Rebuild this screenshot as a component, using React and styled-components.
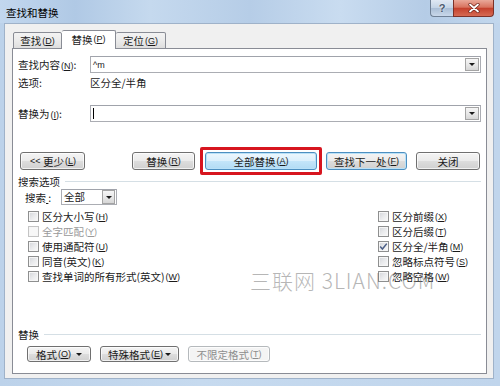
import React from 'react';
import styled, { createGlobalStyle } from 'styled-components';

const FONT = `"Noto Sans CJK SC", "Noto Sans", "Liberation Sans", sans-serif`;

const Global = createGlobalStyle`
  html, body { margin: 0; padding: 0; background: #c3d7ec; overflow: hidden; }
  * { box-sizing: border-box; }
`;

const Window = styled.div`
  position: relative;
  width: 500px;
  height: 386px;
  display: flex;
  flex-direction: column;
  background: linear-gradient(90deg, #bcd2ea 0%, #c6daef 40%, #c0d5ec 100%);
  font-family: ${FONT};
  font-size: 10.5px;
  color: #1a1a1a;
  overflow: hidden;
`;

const TitleBar = styled.div`
  height: 23px;
  flex: none;
  display: flex;
  align-items: flex-start;
  background: linear-gradient(90deg, #c2d7ee 0%, #b0c9e5 15%, #c5d9ee 30%, #b6cde7 50%, #c9dcf0 68%, #b5cce6 85%, #c2d7ed 100%);
`;

const Title = styled.div`
  padding: 6px 0 0 6px;
  font-size: 10.5px;
  line-height: 13px;
  color: #000;
`;

const Caption = styled.div`
  margin-left: auto;
  margin-right: 6px;
  display: flex;
`;

const HelpBtn = styled.div`
  width: 23px;
  height: 17px;
  border: 1px solid #6f8095;
  border-top: none;
  border-right: none;
  border-radius: 0 0 0 4px;
  background: linear-gradient(180deg, #dfe8f3 0%, #c4d4e6 48%, #aabed6 52%, #c9d8ea 100%);
  display: flex;
  align-items: center;
  justify-content: center;
  font-family: "Liberation Sans", sans-serif;
  font-size: 11px;
  font-weight: bold;
  color: #4a5a6e;
  text-shadow: 0 0 2px #fff;
`;

const CloseBtn = styled.div`
  width: 41px;
  height: 17px;
  border: 1px solid #7c3128;
  border-top: none;
  border-radius: 0 0 4px 0;
  background: linear-gradient(180deg, #e9a899 0%, #d8735f 45%, #c4412d 52%, #d66a53 100%);
  display: flex;
  align-items: center;
  justify-content: center;
`;

const Client = styled.div`
  flex: none;
  height: 356px;
  margin: 0 6px 0 4px;
  border: 1px solid #9fb2c9;
  background: #f0f0f0;
  padding: 6px 6px 4px 7px;
  display: flex;
  flex-direction: column;
`;

const Tabs = styled.div`
  display: flex;
  align-items: flex-end;
  height: 19px;
  margin-bottom: -1px;
  padding-left: 1px;
  position: relative;
  z-index: 1;
`;

const Tab = styled.div`
  width: ${p => p.$w}px;
  height: ${p => (p.$active ? 19 : 17)}px;
  border: 1px solid #898c95;
  border-bottom: ${p => (p.$active ? 'none' : '1px solid #898c95')};
  border-left: ${p => (p.$noLeft ? 'none' : '1px solid #898c95')};
  border-radius: 2px 2px 0 0;
  background: ${p => (p.$active ? '#ffffff' : 'linear-gradient(180deg, #f3f3f3 0%, #ebebeb 50%, #dedede 100%)')};
  display: flex;
  align-items: center;
  justify-content: center;
  padding-bottom: ${p => (p.$active ? 2 : 0)}px;
  white-space: nowrap;
`;

const Panel = styled.div`
  position: relative;
  flex: 1;
  border: 1px solid #898c95;
  background: #ffffff;
  padding: 7px 5px 0 5px;
  display: flex;
  flex-direction: column;
`;

const FieldRow = styled.div`
  display: grid;
  grid-template-columns: 72px 1fr;
  align-items: center;
  height: ${p => p.$h || 17}px;
  margin-top: ${p => p.$mt || 0}px;
  white-space: nowrap;
`;

const Combo = styled.div`
  height: ${p => p.$h || 17}px;
  width: ${p => (p.$w ? `${p.$w}px` : 'auto')};
  border: 1px solid #abadb3;
  border-top-color: #a0a3ab;
  background: #fff;
  display: flex;
  align-items: center;
  justify-content: space-between;
  padding: 0 1px 0 2px;
`;

const ComboText = styled.span`
  font-family: ${p => (p.$mono ? '"Liberation Sans", sans-serif' : FONT)};
  font-size: ${p => (p.$mono ? 9 : 10.5)}px;
  line-height: 12px;
`;

const ArrowBox = styled.div`
  width: ${p => p.$w || 14}px;
  height: ${p => p.$h || 13}px;
  border: 1px solid #a4a4a4;
  background: linear-gradient(180deg, #f6f6f6 0%, #e8e8e8 50%, #d6d6d6 100%);
  display: flex;
  align-items: center;
  justify-content: center;
`;

const Tri = styled.span`
  width: 0;
  height: 0;
  border-left: 3px solid transparent;
  border-right: 3px solid transparent;
  border-top: 3px solid #1a1a1a;
  margin-left: ${p => p.$ml || 0}px;
`;

const Caret = styled.span`
  width: 1px;
  height: 11px;
  background: #000;
`;

const ButtonRow = styled.div`
  display: flex;
  align-items: center;
  height: ${p => p.$h}px;
  margin-top: ${p => p.$mt}px;
`;

const Button = styled.div`
  flex: none;
  width: ${p => p.$w}px;
  height: ${p => p.$h || 18}px;
  margin-left: ${p => p.$ml || 0}px;
  border: 1px solid ${p => (p.$disabled ? '#b5b9bc' : p.$def ? '#4d8fc0' : '#707070')};
  border-radius: 3px;
  background: ${p =>
    p.$hot
      ? 'linear-gradient(180deg, #eef7fd 0%, #dcf0fc 48%, #c3e5f9 52%, #b2dbf4 100%)'
      : p.$disabled
      ? '#f4f4f4'
      : 'linear-gradient(180deg, #f4f4f4 0%, #ebebeb 48%, #dddddd 52%, #d0d0d0 100%)'};
  box-shadow: ${p => (p.$def ? 'inset 0 0 0 1px #b9e1f8' : 'inset 0 0 0 1px rgba(255,255,255,0.7)')};
  color: ${p => (p.$disabled ? '#8d8d8d' : '#1a1a1a')};
  display: flex;
  align-items: center;
  justify-content: center;
  white-space: nowrap;
`;

const Highlight = styled.div`
  flex: none;
  margin-left: ${p => p.$ml}px;
  border: 3px solid #d7151f;
  border-radius: 2px;
  padding: 2px;
`;

const Section = styled.div`
  display: flex;
  align-items: center;
  height: 12px;
  margin-top: ${p => p.$mt || 0}px;
`;

const SectionLine = styled.div`
  flex: 1;
  border-top: 1px solid #d5dfe5;
  margin-left: 5px;
`;

const SearchRow = styled.div`
  display: flex;
  align-items: center;
  margin-top: 2px;
  padding-left: 7px;
`;

const SearchLabel = styled.span`
  width: 36px;
`;

const Checks = styled.div`
  display: grid;
  grid-template-columns: 350px auto;
  padding-left: 10px;
  margin-top: 4px;
`;

const Col = styled.div`
  display: flex;
  flex-direction: column;
`;

const CheckRow = styled.div`
  display: flex;
  align-items: center;
  height: 15px;
  white-space: nowrap;
  color: ${p => (p.$disabled ? '#9a9a9a' : '#1a1a1a')};
`;

const Box = styled.span`
  width: 11px;
  height: 11px;
  flex: none;
  border: 1px solid ${p => (p.$disabled ? '#c4c4c4' : '#8e8f8f')};
  background: ${p => (p.$disabled ? '#f7f7f7' : 'linear-gradient(135deg, #d2d4d8 0%, #e9eaec 50%, #fafafa 100%)')};
  box-shadow: inset 0 0 0 1px #f6f6f6;
  margin-right: 3px;
  display: flex;
  align-items: center;
  justify-content: center;
`;

const Mn = styled.span`
  font-family: "Liberation Sans", sans-serif;
  font-size: 9px;
  margin-left: 1px;
`;

const Watermark = styled.div`
  position: absolute;
  left: 237px;
  top: 221px;
  font-family: ${FONT};
  font-weight: 300;
  font-size: 21px;
  line-height: 20px;
  letter-spacing: 1px;
  color: rgba(110, 110, 110, 0.5);
  white-space: nowrap;
  pointer-events: none;
`;

const M = ({ k }) => (
  <Mn>
    (<u>{k}</u>)
  </Mn>
);

const Check = ({ label, k, checked, disabled }) => (
  <CheckRow $disabled={disabled}>
    <Box $disabled={disabled}>
      {checked && (
        <svg width="9" height="9" viewBox="0 0 9 9">
          <path d="M1.2 4.6 L3.4 7 L7.8 1.6" fill="none" stroke="#4b5e86" strokeWidth="1.5" />
        </svg>
      )}
    </Box>
    {label}
    <M k={k} />
  </CheckRow>
);

export default function App() {
  return (
    <>
      <Global />
      <Window>
        <TitleBar>
          <Title>查找和替换</Title>
          <Caption>
            <HelpBtn>?</HelpBtn>
            <CloseBtn>
              <svg width="12" height="10" viewBox="0 0 12 10">
                <path d="M2 1.5 L10 8.5 M10 1.5 L2 8.5" stroke="#6b2118" strokeWidth="3.2" strokeLinecap="round" />
                <path d="M2 1.5 L10 8.5 M10 1.5 L2 8.5" stroke="#ffffff" strokeWidth="1.8" strokeLinecap="round" />
              </svg>
            </CloseBtn>
          </Caption>
        </TitleBar>
        <Client>
          <Tabs>
            <Tab $w={49}>
              查找<M k="D" />
            </Tab>
            <Tab $w={54} $active $noLeft>
              替换<M k="P" />
            </Tab>
            <Tab $w={50} $noLeft>
              定位<M k="G" />
            </Tab>
          </Tabs>
          <Panel>
            <FieldRow>
              <span>
                查找内容<M k="N" />:
              </span>
              <Combo>
                <ComboText $mono>^m</ComboText>
                <ArrowBox>
                  <Tri />
                </ArrowBox>
              </Combo>
            </FieldRow>
            <FieldRow $h={14} $mt={2}>
              <span>选项:</span>
              <span>区分全/半角</span>
            </FieldRow>
            <FieldRow $mt={16}>
              <span>
                替换为<M k="I" />:
              </span>
              <Combo>
                <Caret />
                <ArrowBox>
                  <Tri />
                </ArrowBox>
              </Combo>
            </FieldRow>

            <ButtonRow $h={28} $mt={25}>
              <Button $w={65} $ml={2}>
                <Mn>&lt;&lt;&nbsp;</Mn>更少<M k="L" />
              </Button>
              <Button $w={63} $ml={47}>
                替换<M k="R" />
              </Button>
              <Highlight $ml={5}>
                <Button $w={112} $hot $def>
                  全部替换<M k="A" />
                </Button>
              </Highlight>
              <Button $w={81} $ml={4} $def>
                查找下一处<M k="F" />
              </Button>
              <Button $w={64} $ml={9}>
                关闭
              </Button>
            </ButtonRow>

            <Section>
              <span>搜索选项</span>
              <SectionLine />
            </Section>

            <SearchRow>
              <SearchLabel>
                搜索<u>&nbsp;</u>:
              </SearchLabel>
              <Combo $w={56} $h={16}>
                <ComboText>全部</ComboText>
                <ArrowBox $w={13} $h={14}>
                  <Tri />
                </ArrowBox>
              </Combo>
            </SearchRow>

            <Checks>
              <Col>
                <Check label="区分大小写" k="H" />
                <Check label="全字匹配" k="Y" disabled />
                <Check label="使用通配符" k="U" />
                <Check label="同音(英文)" k="K" />
                <Check label="查找单词的所有形式(英文)" k="W" />
              </Col>
              <Col>
                <Check label="区分前缀" k="X" />
                <Check label="区分后缀" k="T" />
                <Check label="区分全/半角" k="M" checked />
                <Check label="忽略标点符号" k="S" />
                <Check label="忽略空格" k="W" />
              </Col>
            </Checks>

            <Section $mt={44}>
              <span>替换</span>
              <SectionLine />
            </Section>

            <ButtonRow $h={16} $mt={6}>
              <Button $w={64} $h={16} $ml={9}>
                格式<M k="O" />
                <Tri $ml={5} />
              </Button>
              <Button $w={79} $h={16} $ml={9}>
                特殊格式<M k="E" />
                <Tri $ml={2} />
              </Button>
              <Button $w={82} $h={16} $ml={9} $disabled>
                不限定格式<M k="T" />
              </Button>
            </ButtonRow>

            <Watermark>三联网 3LIAN.COM</Watermark>
          </Panel>
        </Client>
      </Window>
    </>
  );
}
